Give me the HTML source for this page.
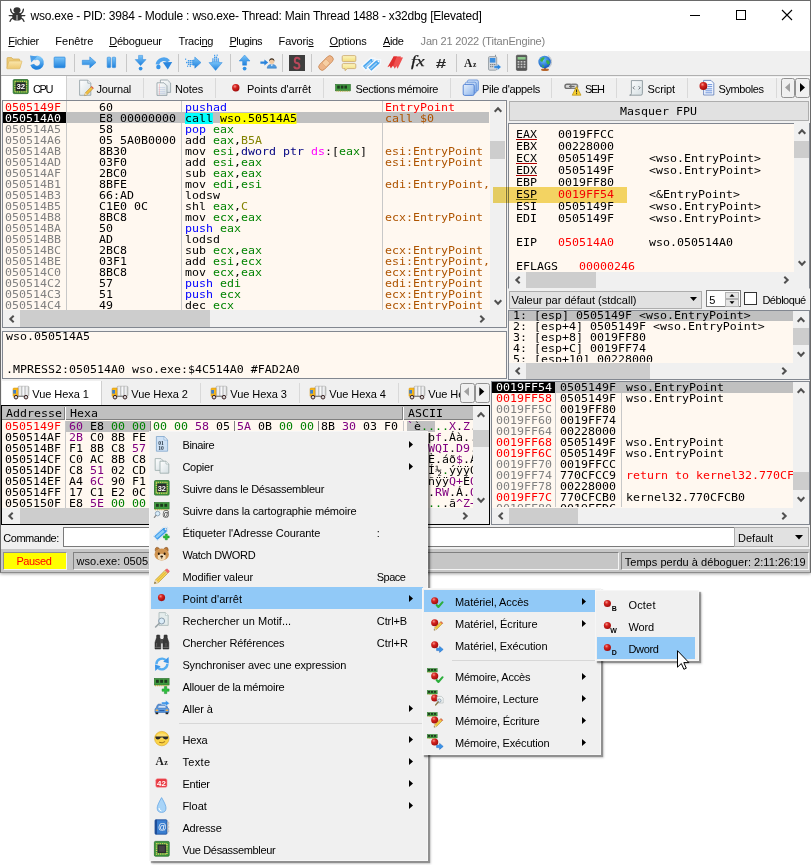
<!DOCTYPE html>
<html><head><meta charset="utf-8"><title>x32dbg</title>
<style>
*{box-sizing:border-box;margin:0;padding:0}
html,body{width:811px;height:865px;overflow:hidden;background:#fff}
body{position:relative;font-family:"Liberation Sans",sans-serif;font-size:11px;color:#000}
.a{position:absolute}
.m{font-family:"DejaVu Sans Mono","Liberation Mono",monospace;font-size:9.6px;white-space:pre;line-height:11px;transform:scaleX(1.2112);transform-origin:0 0}
.r{position:absolute;left:0;height:11px;white-space:pre}
.t{position:absolute;white-space:pre}
.c{overflow:hidden}
.red{color:#f00}.gr{color:#808080}.bl{color:#00f}.gn{color:#008300}.ol{color:#828200}.br{color:#ae5400}.pu{color:#800080}.nv{color:#000080}.mg{color:#f0f}.g0{color:#008000}
.sel{background:#c0c0c0}
svg{position:absolute;overflow:visible}
</style></head><body>

<div class="a" style="left:0px;top:0px;width:811px;height:573px;background:#f0f0f0;border:1px solid #6a6a6a;border-bottom:1px solid #8c8c8c;box-shadow:0 1px 3px rgba(0,0,0,.35);"></div>
<div class="a" style="left:1px;top:1px;width:809px;height:49px;background:#fff;"></div>
<div class="t " style="left:30.5px;top:10.44px;font-size:12px;line-height:12px;letter-spacing:-0.200px;">wso.exe - PID: 3984 - Module : wso.exe- Thread: Main Thread 1488 - x32dbg [Elevated]</div>
<svg style="left:0;top:0" width="30" height="30" viewBox="0 0 30 30"><g fill="none" stroke="#333" stroke-width="1.300" stroke-linecap="round"><path d="M13.600 13.800Q10.800 12.600 10.600 9.200M20.400 13.800Q23.200 12.600 23.400 9.200M9.200 15.600H24.800M13.400 17.800Q10.600 18.600 10 21.400M20.600 17.800Q23.400 18.600 24 21.400"/></g><ellipse cx="17" cy="10.200" rx="3.500" ry="3" fill="#333"/><path d="M12.200 16.400Q12.200 12.600 17 12.600T21.800 16.400Q21.800 20.600 17 20.600T12.200 16.400z" fill="#333"/><rect x="16.300" y="15" width="1.400" height="5.400" fill="#aaa"/></svg>
<svg style="left:0;top:0" width="811" height="30"><g stroke="#000" stroke-width="1" fill="none" shape-rendering="crispEdges"><path d="M690 15.5h10"/><rect x="736.5" y="10.5" width="9" height="9"/></g><path d="M782 10l10 10M792 10l-10 10" stroke="#000" stroke-width="1.1"/></svg>
<div class="t " style="left:8.3px;top:35.59px;font-size:11px;line-height:11px;letter-spacing:-0.374px;"><u>F</u>ichier</div>
<div class="t " style="left:55.3px;top:35.59px;font-size:11px;line-height:11px;letter-spacing:0.011px;">Fenêtre</div>
<div class="t " style="left:109.2px;top:35.59px;font-size:11px;line-height:11px;letter-spacing:-0.204px;"><u>D</u>ébogueur</div>
<div class="t " style="left:178.6px;top:35.59px;font-size:11px;line-height:11px;letter-spacing:-0.254px;">Traci<u>n</u>g</div>
<div class="t " style="left:229.5px;top:35.59px;font-size:11px;line-height:11px;letter-spacing:-0.511px;"><u>P</u>lugins</div>
<div class="t " style="left:278.6px;top:35.59px;font-size:11px;line-height:11px;letter-spacing:-0.152px;">Favori<u>s</u></div>
<div class="t " style="left:329.6px;top:35.59px;font-size:11px;line-height:11px;letter-spacing:-0.132px;"><u>O</u>ptions</div>
<div class="t " style="left:383px;top:35.59px;font-size:11px;line-height:11px;letter-spacing:-0.383px;"><u>A</u>ide</div>
<div class="t " style="left:420.6px;top:35.59px;font-size:11px;line-height:11px;color:#808080;letter-spacing:-0.193px;">Jan 21 2022 (TitanEngine)</div>
<div class="a" style="left:1px;top:50px;width:809px;height:26px;background:#f0f0f0;border-top:1px solid #fff;border-bottom:1px solid #b0b0b0;"></div>
<div class="a" style="left:74px;top:54px;width:1px;height:18px;background:#c8c8c8;"></div>
<div class="a" style="left:126px;top:54px;width:1px;height:18px;background:#c8c8c8;"></div>
<div class="a" style="left:178px;top:54px;width:1px;height:18px;background:#c8c8c8;"></div>
<div class="a" style="left:230px;top:54px;width:1px;height:18px;background:#c8c8c8;"></div>
<div class="a" style="left:282px;top:54px;width:1px;height:18px;background:#c8c8c8;"></div>
<div class="a" style="left:311px;top:54px;width:1px;height:18px;background:#c8c8c8;"></div>
<div class="a" style="left:456px;top:54px;width:1px;height:18px;background:#c8c8c8;"></div>
<div class="a" style="left:507px;top:54px;width:1px;height:18px;background:#c8c8c8;"></div>
<svg style="left:0;top:50px" width="811" height="26" viewBox="0 50 811 26">
<defs>
<linearGradient id="gb" x1="0" y1="0" x2="0" y2="1"><stop offset="0" stop-color="#7cc6fa"/><stop offset="1" stop-color="#1e80dc"/></linearGradient>
<linearGradient id="gf" x1="0" y1="0" x2="0" y2="1"><stop offset="0" stop-color="#fae6ac"/><stop offset="1" stop-color="#edc870"/></linearGradient>
<linearGradient id="gy" x1="0" y1="0" x2="0" y2="1"><stop offset="0" stop-color="#fdf6c0"/><stop offset="1" stop-color="#f2dc78"/></linearGradient>
<radialGradient id="gg" cx="0.4" cy="0.35" r="0.7"><stop offset="0" stop-color="#6cc0ff"/><stop offset="1" stop-color="#0a50b8"/></radialGradient>
</defs>
<!-- open folder -->
<path d="M7 68.300V58.400q0-.8.8-.8h3.800l1.300 1.400h6q.8 0 .8.800v1.300" fill="#eccb78" stroke="#d4a94c" stroke-width=".7"/>
<path d="M9.400 61H21.400q.7 0 .5.700L20 68.200q-.2.600-.9.600H7.400q-.700 0-.5-.700L8.800 61.600q.2-.6.600-.6z" fill="url(#gf)" stroke="#dab35a" stroke-width=".6"/>
<!-- restart -->
<path d="M33.600 59A5 5 0 1 1 32.200 64.400" fill="none" stroke="url(#gb)" stroke-width="4"/>
<path d="M30 55.400L37.200 56.600L31.200 62.600z" fill="#4a9ee8"/>
<!-- stop -->
<rect x="54.100" y="57.100" width="11" height="10.600" rx=".8" fill="url(#gb)" stroke="#2a86dc" stroke-width=".7"/>
<!-- run arrow -->
<path d="M82.3 60.3H89.8V56.9L96 62.4L89.8 67.9V64.6H82.3z" fill="url(#gb)" stroke="#2a86dc" stroke-width=".6"/>
<!-- pause -->
<rect x="107.2" y="57.2" width="3.4" height="10.4" rx=".7" fill="url(#gb)" stroke="#2a86dc" stroke-width=".6"/><rect x="112.2" y="57.2" width="3.4" height="10.4" rx=".7" fill="url(#gb)" stroke="#2a86dc" stroke-width=".6"/>
<!-- step into -->
<path d="M138.6 55.4H142.6V59.6H146L140.6 65.6L135.2 59.6H138.6z" fill="url(#gb)" stroke="#2a86dc" stroke-width=".5"/><circle cx="140.6" cy="68.6" r="1.9" fill="#2f90e6"/>
<!-- step over -->
<path d="M157.400 64.600A6.400 6.400 0 0 1 168.600 61.400" fill="none" stroke="#4fa4ee" stroke-width="3.600"/><path d="M162.800 62.200L172.200 62L167.800 69.400z" fill="#2a86de"/><circle cx="158.400" cy="67" r="2.200" fill="#3494ea"/>
<!-- trace into -->
<path d="M192.800 60H194.800V57L201 62.600L194.800 68.200V65.200H192.800z" fill="url(#gb)" stroke="#2a86dc" stroke-width=".5"/>
<g fill="#3f9aec"><rect x="186" y="61.8" width="1.400" height="1.400"/><rect x="187.8" y="60" width="1.400" height="1.400"/><rect x="187.8" y="61.8" width="1.400" height="1.400"/><rect x="187.8" y="63.6" width="1.400" height="1.400"/><rect x="189.6" y="60" width="1.400" height="1.400"/><rect x="189.6" y="61.8" width="1.400" height="1.400"/><rect x="189.6" y="63.6" width="1.400" height="1.400"/><rect x="191.4" y="60" width="1.400" height="1.400"/><rect x="191.4" y="61.8" width="1.400" height="1.400"/><rect x="191.4" y="63.6" width="1.400" height="1.400"/><rect x="185" y="58.600" width="1.200" height="1.200"/><rect x="187" y="65.600" width="1.200" height="1.200"/><rect x="189.600" y="65.400" width="1.400" height="1.400"/></g>
<!-- trace over -->
<path d="M212 62V61.800H219.200V62.600H222.200L215.600 70.400L209 62.600H212z" fill="url(#gb)" stroke="#2a86dc" stroke-width=".5"/>
<g fill="#3f9aec"><rect x="212.2" y="58.4" width="1.400" height="1.400"/><rect x="212.2" y="60.2" width="1.400" height="1.400"/><rect x="214" y="56.6" width="1.400" height="1.400"/><rect x="214" y="58.4" width="1.400" height="1.400"/><rect x="214" y="60.2" width="1.400" height="1.400"/><rect x="215.8" y="56.6" width="1.400" height="1.400"/><rect x="215.8" y="58.4" width="1.400" height="1.400"/><rect x="215.8" y="60.2" width="1.400" height="1.400"/><rect x="217.6" y="58.4" width="1.400" height="1.400"/><rect x="217.6" y="60.2" width="1.400" height="1.400"/><rect x="214" y="54.800" width="1.200" height="1.200"/><rect x="216.600" y="54.600" width="1.200" height="1.200"/></g>
<!-- run till return -->
<path d="M242.6 65.2H246.6V61H250L244.6 55L239.2 61H242.6z" fill="url(#gb)" stroke="#2a86dc" stroke-width=".5"/><circle cx="244.6" cy="68.6" r="1.9" fill="#2f90e6"/>
<!-- run to user -->
<path d="M260.4 61.4H264.4V59.6L268.2 62.6L264.4 65.6V63.8H260.4z" fill="#2a84dc"/>
<path d="M267.2 68.2q0-3.8 4.6-3.8t4.6 3.8z" fill="#4f9ade" stroke="#2f6fb4" stroke-width=".5"/><path d="M270.6 64.4l1.2 1.8l1.2-1.8z" fill="#fff"/>
<circle cx="271.8" cy="61.6" r="2.5" fill="#f0c8a0"/><path d="M269.2 61.4q0-3.2 2.6-3.2t2.6 3.2q-.8-1.8-2.6-1.8t-2.6 1.800z" fill="#3a2a1a"/>
<!-- scylla S -->
<rect x="289" y="55" width="16" height="16" fill="#3e3e3e"/>
<path d="M299.800 59.600Q299.200 57.600 297 57.800T294.800 60.400T297 63T299.400 65.800T297 68.400T294.200 66.400" fill="none" stroke="#b8485a" stroke-width="2"/>
<!-- patch -->
<g transform="rotate(-45 326 63)"><rect x="317.200" y="59.600" width="17.600" height="6.800" rx="3.400" fill="#eeb588" stroke="#c98a58" stroke-width=".8"/><rect x="323.200" y="60.200" width="5.600" height="5.600" fill="#f6cfa4" stroke="#d89c68" stroke-width=".5"/></g>
<!-- comments -->
<rect x="342.2" y="55.6" width="13.600" height="6" rx="1.2" fill="url(#gy)" stroke="#c8a468" stroke-width=".8"/>
<path d="M343.400 63.600H354.600q1.200 0 1.200 1.200V67.400q0 1.200 -1.200 1.200H347.400L345 70.600V68.600H343.400q-1.200 0 -1.200 -1.200V64.800q0 -1.200 1.200 -1.200z" fill="url(#gy)" stroke="#c8a468" stroke-width=".8"/>
<!-- labels (blue tags) -->
<g transform="rotate(-42 369 63.500)"><path d="M362 60.600H374L377 63.500L374 66.400H362z" fill="#4aa6ee" stroke="#f4f8fc" stroke-width="1.500"/><path d="M363.500 63.500h8.500" stroke="#9cd0f8" stroke-width="1.400"/><circle cx="374.400" cy="63.500" r=".9" fill="#fff"/></g>
<g transform="rotate(-42 374.500 65)"><path d="M367.500 62.100H379.500L382.500 65L379.500 67.900H367.500z" fill="#4aa6ee" stroke="#f4f8fc" stroke-width="1.500"/><path d="M369 65h8.500" stroke="#9cd0f8" stroke-width="1.400"/><circle cx="379.900" cy="65" r=".9" fill="#fff"/></g>
<!-- bookmarks -->
<path d="M393.600 56.400L401 56.400L394.800 68.800L393.400 65.800L390 67.800z" fill="#e83838"/><path d="M396 57L403 57.400L397.600 68.800L396.200 66L393.400 67z" fill="#f05050"/><path d="M387.400 67.200L393.600 56.400L397 56.400L391 68.600L390 66z" fill="#e03030"/>
<!-- fx -->
<text x="411" y="66.300" font-family="Liberation Serif,serif" font-style="italic" font-size="14.500" fill="#1a1a1a" stroke="#1a1a1a" stroke-width=".25" textLength="13.500" lengthAdjust="spacingAndGlyphs">fx</text>
<!-- hash -->
<text x="435.600" y="67.700" font-family="Liberation Sans,sans-serif" font-style="italic" font-weight="bold" font-size="13.200" fill="#2a2a2a" textLength="10.400" lengthAdjust="spacingAndGlyphs">#</text>
<!-- Az -->
<text x="464" y="67" font-family="Liberation Serif,serif" font-weight="bold" font-size="11.500" fill="#222">A</text><text x="473" y="67" font-family="Liberation Serif,serif" font-weight="bold" font-size="7.500" fill="#222">z</text>
<!-- phone -->
<rect x="488.500" y="56.600" width="8.200" height="13.600" rx="1.200" fill="#d4d8dc" stroke="#8c949c" stroke-width=".8"/><rect x="489.800" y="58" width="5.600" height="4.600" fill="#3a8ee0"/><rect x="495" y="54.800" width="1" height="2" fill="#8c949c"/>
<g fill="#808890"><rect x="490" y="64" width="1.400" height="1.200"/><rect x="492" y="64" width="1.400" height="1.200"/><rect x="494" y="64" width="1.400" height="1.200"/><rect x="490" y="66" width="1.400" height="1.200"/><rect x="492" y="66" width="1.400" height="1.200"/><rect x="494" y="66" width="1.400" height="1.200"/></g>
<path d="M494 65.800H497.400V63.800L501.200 67L497.400 70.200V68.200H494z" fill="#2a84dc" stroke="#e8f2fc" stroke-width=".4"/>
<!-- calculator -->
<rect x="516.400" y="55.200" width="10.400" height="15.200" rx="1" fill="#5a5a5a" stroke="#3c3c3c" stroke-width=".6"/><rect x="517.600" y="57" width="8" height="2.600" fill="#8cc88c"/>
<g fill="#c8c8c8"><rect x="517.600" y="61" width="1.800" height="1.600"/><rect x="520.600" y="61" width="1.800" height="1.600"/><rect x="523.600" y="61" width="1.800" height="1.600"/><rect x="517.600" y="63.600" width="1.800" height="1.600"/><rect x="520.600" y="63.600" width="1.800" height="1.600"/><rect x="523.600" y="63.600" width="1.800" height="1.600"/><rect x="517.600" y="66.200" width="1.800" height="1.600"/><rect x="520.600" y="66.200" width="1.800" height="1.600"/><rect x="523.600" y="66.200" width="1.800" height="1.600"/></g>
<!-- globe -->
<path d="M548 55.600A7.400 7.400 0 0 1 548.400 68" fill="none" stroke="#b8c0c8" stroke-width="1"/>
<ellipse cx="545" cy="69.800" rx="4" ry="1.300" fill="#b86830"/><rect x="544.200" y="67.600" width="1.600" height="2" fill="#a05828"/>
<circle cx="544.600" cy="62" r="6.200" fill="url(#gg)"/>
<path d="M541 58.400q1.600-1.400 3.400-1.200q.6 1.400-.6 2.200t-1 2.200q-1.600.4-2.400-.6t.600-2.600z M546 60.600q1.800-.8 3 .4t.6 3q-1.400 1-2.400-.2t-1.200-3.200z M542.400 64.600q1.400.2 1.600 1.600t-.8 1.400t-.800-3z" fill="#3cae48"/>
</svg>
<div class="a" style="left:1px;top:76px;width:809px;height:24px;background:#f0f0f0;"></div>
<div class="a" style="left:67px;top:77px;width:743px;height:1px;background:#fafafa;"></div>
<div class="a" style="left:2px;top:76px;width:65px;height:24px;background:#fff;border-right:1px solid #d0d0d0;"></div>
<div class="a" style="left:143px;top:78px;width:1px;height:20px;background:#d9d9d9;"></div>
<div class="a" style="left:215px;top:78px;width:1px;height:20px;background:#d9d9d9;"></div>
<div class="a" style="left:323px;top:78px;width:1px;height:20px;background:#d9d9d9;"></div>
<div class="a" style="left:450px;top:78px;width:1px;height:20px;background:#d9d9d9;"></div>
<div class="a" style="left:551px;top:78px;width:1px;height:20px;background:#d9d9d9;"></div>
<div class="a" style="left:616px;top:78px;width:1px;height:20px;background:#d9d9d9;"></div>
<div class="a" style="left:687px;top:78px;width:1px;height:20px;background:#d9d9d9;"></div>
<div class="a" style="left:776px;top:78px;width:1px;height:20px;background:#d9d9d9;"></div>
<div class="t " style="left:33px;top:84.09px;font-size:11px;line-height:11px;letter-spacing:-1.411px;">CPU</div>
<div class="t " style="left:96.5px;top:84.09px;font-size:11px;line-height:11px;letter-spacing:-0.225px;">Journal</div>
<div class="t " style="left:175px;top:84.09px;font-size:11px;line-height:11px;letter-spacing:-0.150px;">Notes</div>
<div class="t " style="left:247px;top:84.09px;font-size:11px;line-height:11px;letter-spacing:-0.033px;">Points d'arrêt</div>
<div class="t " style="left:355.5px;top:84.09px;font-size:11px;line-height:11px;letter-spacing:-0.347px;">Sections mémoire</div>
<div class="t " style="left:482px;top:84.09px;font-size:11px;line-height:11px;letter-spacing:-0.310px;">Pile d'appels</div>
<div class="t " style="left:585px;top:84.09px;font-size:11px;line-height:11px;letter-spacing:-1.375px;">SEH</div>
<div class="t " style="left:647.5px;top:84.09px;font-size:11px;line-height:11px;letter-spacing:-0.104px;">Script</div>
<div class="t " style="left:718.5px;top:84.09px;font-size:11px;line-height:11px;letter-spacing:-0.412px;">Symboles</div>
<svg style="left:0;top:76px" width="811" height="24" viewBox="0 76 811 24">
<defs><radialGradient id="rb" cx="0.38" cy="0.32" r="0.75"><stop offset="0" stop-color="#f4958c"/><stop offset="0.35" stop-color="#d62420"/><stop offset="1" stop-color="#960808"/></radialGradient>
<linearGradient id="pg" x1="0" y1="0" x2="1" y2="1"><stop offset="0" stop-color="#ffffff"/><stop offset="1" stop-color="#d4dee2"/></linearGradient>
<linearGradient id="sk" x1="0" y1="0" x2="1" y2="1"><stop offset="0" stop-color="#e6f0fc"/><stop offset="1" stop-color="#8cb4ec"/></linearGradient></defs>
<!-- cpu chip -->
<g id="chip"><rect x="13.200" y="79.600" width="15" height="14" rx="1" fill="#3a8f3a" stroke="#246424" stroke-width=".8"/><rect x="14.900" y="81.300" width="11.600" height="10.600" fill="none" stroke="#e6cf5c" stroke-width="1.300" stroke-dasharray=".9 .9"/><rect x="15.700" y="82.400" width="10" height="8.400" fill="#262626"/><text x="16.400" y="89.300" font-family="Liberation Sans,sans-serif" font-weight="bold" font-size="6.800" fill="#fff" textLength="8.600" lengthAdjust="spacingAndGlyphs">32</text></g>
<!-- journal: page + pencil -->
<path d="M79.600 80.200H87.800L90.800 83.200V95.300H79.600z" fill="url(#pg)" stroke="#8e9ca2" stroke-width=".8"/><path d="M87.800 80.200V83.200H90.800" fill="#f4f6f8" stroke="#8e9ca2" stroke-width=".7"/>
<path d="M84.600 95.600L85.400 92.800L91.600 86.400L93.400 88.200L87.200 94.600z" fill="#f2c040" stroke="#a87818" stroke-width=".5"/><path d="M84.600 95.600L85.400 92.800L87.200 94.600z" fill="#f0d8b0"/><path d="M91 87L92.800 88.800L93.600 88L91.800 86.200z" fill="#e05050"/>
<!-- notes: two pages -->
<path d="M160.400 80H167.500L170.600 83V92.400H160.400z" fill="url(#pg)" stroke="#8e9ca2" stroke-width=".8"/>
<path d="M157 82.800H164L167 85.800V95.400H157z" fill="url(#pg)" stroke="#8e9ca2" stroke-width=".8"/><path d="M158.600 87.600h6.600M158.600 89.600h6.600M158.600 91.600h6.600M158.600 93.400h6.600" stroke="#b8c4e0" stroke-width=".6"/><path d="M159.400 84v11" stroke="#f0a0a0" stroke-width=".5"/>
<!-- breakpoint -->
<circle cx="235.800" cy="87.800" r="3.700" fill="url(#rb)"/>
<!-- memory -->
<g id="ram"><rect x="335.600" y="84.400" width="14.800" height="6.400" fill="#3f9a3f" stroke="#2a6e2a" stroke-width=".6"/><rect x="337.200" y="85.600" width="2.600" height="3" fill="#1e3a1e"/><rect x="340.800" y="85.600" width="2.600" height="3" fill="#1e3a1e"/><rect x="344.400" y="85.600" width="2.600" height="3" fill="#1e3a1e"/><path d="M336.400 91.200h13.200" stroke="#c8b040" stroke-width="1" stroke-dasharray="1 .8"/></g>
<!-- call stack -->
<rect x="467.400" y="80" width="11" height="11" rx="1.500" fill="url(#sk)" stroke="#5a8ad8" stroke-width=".8"/><rect x="465.200" y="82.200" width="11" height="11" rx="1.500" fill="url(#sk)" stroke="#5a8ad8" stroke-width=".8"/><rect x="463.200" y="84.400" width="11" height="11" rx="1.500" fill="url(#sk)" stroke="#4a7ad0" stroke-width=".9"/>
<!-- SEH chain + warning -->
<rect x="565" y="84.200" width="7" height="4.200" rx="2" fill="#d8d8d8" stroke="#6e6e6e" stroke-width="1.400"/><rect x="570.600" y="84.200" width="7" height="4.200" rx="2" fill="#d8d8d8" stroke="#7e7e7e" stroke-width="1.400"/><path d="M569 86.400h5.600" stroke="#6a6a6a" stroke-width="1.200"/>
<path d="M576.600 86.600L581 95.200H572.200z" fill="#f8d030" stroke="#b89010" stroke-width=".7" stroke-linejoin="round"/><path d="M576.600 89.400v3M576.600 93.200v1" stroke="#222" stroke-width="1"/>
<!-- script -->
<path d="M631.400 80.600H642.400V93.600q0 1.600-1.600 1.600H629.600q1.800 0 1.800-1.600z" fill="url(#pg)" stroke="#7e8a90" stroke-width=".8"/><path d="M634.600 86.200L633 87.800L634.600 89.400M638.600 86.200L640.200 87.800L638.600 89.400" fill="none" stroke="#505860" stroke-width=".8"/>
<!-- symbols -->
<path d="M703.600 80.400H711L713.800 83.200V95H703.600z" fill="#f4f8ff" stroke="#5a7ab8" stroke-width=".8"/><path d="M707.600 84.600h4.600M707.600 86.600h4.600M705.400 88.800h6.800M705.400 90.800h6.800M705.400 92.800h6.800" stroke="#4a78d0" stroke-width=".8"/>
<circle cx="703.400" cy="86" r="3.900" fill="url(#rb)"/>
</svg>
<div class="a" style="left:780.5px;top:77.5px;width:14.5px;height:20px;background:#f0f0f0;border:1px solid #929292;border-radius:2.5px;"></div>
<div class="a" style="left:795px;top:77.5px;width:14.5px;height:20px;background:#f0f0f0;border:1px solid #929292;border-radius:2.5px;"></div>
<svg style="left:781px;top:78px" width="28" height="20"><path d="M9 5v9l-5-4.5z" fill="#a0a0a0"/><path d="M19 5v9l5-4.5z" fill="#000"/></svg>
<div class="a" style="left:2px;top:100px;width:505px;height:228px;background:#fff8f0;border:1px solid #828790;"></div>
<div class="a" style="left:66px;top:101px;width:1px;height:209px;background:#c8c8c8;"></div>
<div class="a" style="left:181px;top:101px;width:1px;height:209px;background:#c8c8c8;"></div>
<div class="a" style="left:382px;top:101px;width:1px;height:209px;background:#c8c8c8;"></div>
<div class="a" style="left:3px;top:112px;width:486px;height:11px;background:#c0c0c0;"></div>
<div class="a" style="left:3px;top:112px;width:63px;height:11px;background:#000;"></div>
<div class="t m" style="left:5px;top:101.5px;color:#f00;">0505149F</div>
<div class="t m" style="left:99px;top:101.5px;">60</div>
<div class="t m" style="left:185px;top:101.5px;"><span class="bl">pushad</span></div>
<div class="a c" style="left:385px;top:101.5px;width:104px;height:11px"><div class="t m" style="left:0;top:0;color:#ae5400;"><span class="red">EntryPoint</span></div></div>
<div class="t m" style="left:5px;top:112.5px;color:#fff;">050514A0</div>
<div class="t m" style="left:99px;top:112.5px;">E8 00000000</div>
<div class="t m" style="left:185px;top:112.5px;"><span style="background:#0ff">call</span> <span style="background:#ff0">wso.50514A5</span></div>
<div class="a c" style="left:385px;top:112.5px;width:104px;height:11px"><div class="t m" style="left:0;top:0;color:#ae5400;">call $0</div></div>
<div class="t m" style="left:5px;top:123.5px;color:#808080;">050514A5</div>
<div class="t m" style="left:99px;top:123.5px;">58</div>
<div class="t m" style="left:185px;top:123.5px;"><span class="bl">pop</span> <span class="gn">eax</span></div>
<div class="t m" style="left:5px;top:134.5px;color:#808080;">050514A6</div>
<div class="t m" style="left:99px;top:134.5px;">05 5A0B0000</div>
<div class="t m" style="left:185px;top:134.5px;">add <span class="gn">eax</span>,<span class="ol">B5A</span></div>
<div class="t m" style="left:5px;top:145.5px;color:#808080;">050514AB</div>
<div class="t m" style="left:99px;top:145.5px;">8B30</div>
<div class="t m" style="left:185px;top:145.5px;">mov <span class="gn">esi</span>,<span class="nv">dword ptr</span> <span class="mg">ds</span>:[<span class="gn">eax</span>]</div>
<div class="a c" style="left:385px;top:145.5px;width:104px;height:11px"><div class="t m" style="left:0;top:0;color:#ae5400;">esi:EntryPoint</div></div>
<div class="t m" style="left:5px;top:156.5px;color:#808080;">050514AD</div>
<div class="t m" style="left:99px;top:156.5px;">03F0</div>
<div class="t m" style="left:185px;top:156.5px;">add <span class="gn">esi</span>,<span class="gn">eax</span></div>
<div class="a c" style="left:385px;top:156.5px;width:104px;height:11px"><div class="t m" style="left:0;top:0;color:#ae5400;">esi:EntryPoint</div></div>
<div class="t m" style="left:5px;top:167.5px;color:#808080;">050514AF</div>
<div class="t m" style="left:99px;top:167.5px;">2BC0</div>
<div class="t m" style="left:185px;top:167.5px;">sub <span class="gn">eax</span>,<span class="gn">eax</span></div>
<div class="t m" style="left:5px;top:178.5px;color:#808080;">050514B1</div>
<div class="t m" style="left:99px;top:178.5px;">8BFE</div>
<div class="t m" style="left:185px;top:178.5px;">mov <span class="gn">edi</span>,<span class="gn">esi</span></div>
<div class="a c" style="left:385px;top:178.5px;width:104px;height:11px"><div class="t m" style="left:0;top:0;color:#ae5400;">edi:EntryPoint,</div></div>
<div class="t m" style="left:5px;top:189.5px;color:#808080;">050514B3</div>
<div class="t m" style="left:99px;top:189.5px;">66:AD</div>
<div class="t m" style="left:185px;top:189.5px;">lodsw</div>
<div class="t m" style="left:5px;top:200.5px;color:#808080;">050514B5</div>
<div class="t m" style="left:99px;top:200.5px;">C1E0 0C</div>
<div class="t m" style="left:185px;top:200.5px;">shl <span class="gn">eax</span>,<span class="ol">C</span></div>
<div class="t m" style="left:5px;top:211.5px;color:#808080;">050514B8</div>
<div class="t m" style="left:99px;top:211.5px;">8BC8</div>
<div class="t m" style="left:185px;top:211.5px;">mov <span class="gn">ecx</span>,<span class="gn">eax</span></div>
<div class="a c" style="left:385px;top:211.5px;width:104px;height:11px"><div class="t m" style="left:0;top:0;color:#ae5400;">ecx:EntryPoint</div></div>
<div class="t m" style="left:5px;top:222.5px;color:#808080;">050514BA</div>
<div class="t m" style="left:99px;top:222.5px;">50</div>
<div class="t m" style="left:185px;top:222.5px;"><span class="bl">push</span> <span class="gn">eax</span></div>
<div class="t m" style="left:5px;top:233.5px;color:#808080;">050514BB</div>
<div class="t m" style="left:99px;top:233.5px;">AD</div>
<div class="t m" style="left:185px;top:233.5px;">lodsd</div>
<div class="t m" style="left:5px;top:244.5px;color:#808080;">050514BC</div>
<div class="t m" style="left:99px;top:244.5px;">2BC8</div>
<div class="t m" style="left:185px;top:244.5px;">sub <span class="gn">ecx</span>,<span class="gn">eax</span></div>
<div class="a c" style="left:385px;top:244.5px;width:104px;height:11px"><div class="t m" style="left:0;top:0;color:#ae5400;">ecx:EntryPoint</div></div>
<div class="t m" style="left:5px;top:255.5px;color:#808080;">050514BE</div>
<div class="t m" style="left:99px;top:255.5px;">03F1</div>
<div class="t m" style="left:185px;top:255.5px;">add <span class="gn">esi</span>,<span class="gn">ecx</span></div>
<div class="a c" style="left:385px;top:255.5px;width:104px;height:11px"><div class="t m" style="left:0;top:0;color:#ae5400;">esi:EntryPoint,</div></div>
<div class="t m" style="left:5px;top:266.5px;color:#808080;">050514C0</div>
<div class="t m" style="left:99px;top:266.5px;">8BC8</div>
<div class="t m" style="left:185px;top:266.5px;">mov <span class="gn">ecx</span>,<span class="gn">eax</span></div>
<div class="a c" style="left:385px;top:266.5px;width:104px;height:11px"><div class="t m" style="left:0;top:0;color:#ae5400;">ecx:EntryPoint</div></div>
<div class="t m" style="left:5px;top:277.5px;color:#808080;">050514C2</div>
<div class="t m" style="left:99px;top:277.5px;">57</div>
<div class="t m" style="left:185px;top:277.5px;"><span class="bl">push</span> <span class="gn">edi</span></div>
<div class="a c" style="left:385px;top:277.5px;width:104px;height:11px"><div class="t m" style="left:0;top:0;color:#ae5400;">edi:EntryPoint</div></div>
<div class="t m" style="left:5px;top:288.5px;color:#808080;">050514C3</div>
<div class="t m" style="left:99px;top:288.5px;">51</div>
<div class="t m" style="left:185px;top:288.5px;"><span class="bl">push</span> <span class="gn">ecx</span></div>
<div class="a c" style="left:385px;top:288.5px;width:104px;height:11px"><div class="t m" style="left:0;top:0;color:#ae5400;">ecx:EntryPoint</div></div>
<div class="t m" style="left:5px;top:299.5px;color:#808080;">050514C4</div>
<div class="t m" style="left:99px;top:299.5px;">49</div>
<div class="t m" style="left:185px;top:299.5px;">dec <span class="gn">ecx</span></div>
<div class="a c" style="left:385px;top:299.5px;width:104px;height:11px"><div class="t m" style="left:0;top:0;color:#ae5400;">ecx:EntryPoint</div></div>
<div class="a" style="left:490px;top:101px;width:15px;height:209px;background:#f0f0f0;"></div>
<div class="a" style="left:490px;top:141px;width:15px;height:18px;background:#cdcdcd;"></div>
<svg style="left:497.5px;top:110.2px" width="1" height="1"><path d="M-3.3 1.7L0 -1.7L3.3 1.7" fill="none" stroke="#505050" stroke-width="2"/></svg>
<svg style="left:497.5px;top:301.5px" width="1" height="1"><path d="M-3.3 -1.7L0 1.7L3.3 -1.7" fill="none" stroke="#505050" stroke-width="2"/></svg>
<div class="a" style="left:3px;top:310px;width:487px;height:17px;background:#f0f0f0;"></div>
<div class="a" style="left:20px;top:310px;width:190px;height:17px;background:#cdcdcd;"></div>
<svg style="left:11.5px;top:318.5px" width="1" height="1"><path d="M1.7 -3.3L-1.7 0L1.700 3.300" fill="none" stroke="#505050" stroke-width="2"/></svg>
<svg style="left:481.5px;top:318.5px" width="1" height="1"><path d="M-1.7 -3.3L1.7 0L-1.700 3.300" fill="none" stroke="#505050" stroke-width="2"/></svg>
<div class="a" style="left:490px;top:310px;width:15px;height:17px;background:#f0f0f0;"></div>
<div class="a" style="left:509px;top:101px;width:300px;height:20px;background:#e1e1e1;border:1px solid #adadad;"></div>
<div class="t m" style="left:620px;top:105.5px;">Masquer FPU</div>
<div class="a" style="left:508px;top:123px;width:302px;height:166px;background:#fff8f0;border:1px solid #828790;border-bottom-color:#f0f0f0;"></div>
<div class="t m" style="left:516px;top:128.8px;">EAX</div>
<div class="a" style="left:516px;top:138.60000000000002px;width:21px;height:1.8px;background:#b00000;"></div>
<div class="t m" style="left:558px;top:128.8px;">0019FFCC</div>
<div class="t m" style="left:516px;top:140.8px;">EBX</div>
<div class="t m" style="left:558px;top:140.8px;">00228000</div>
<div class="t m" style="left:516px;top:152.8px;">ECX</div>
<div class="a" style="left:516px;top:162.60000000000002px;width:21px;height:1.8px;background:#b00000;"></div>
<div class="t m" style="left:558px;top:152.8px;">0505149F</div>
<div class="t m" style="left:649px;top:152.8px;">&lt;wso.EntryPoint&gt;</div>
<div class="t m" style="left:516px;top:164.8px;">EDX</div>
<div class="a" style="left:516px;top:174.60000000000002px;width:21px;height:1.8px;background:#b00000;"></div>
<div class="t m" style="left:558px;top:164.8px;">0505149F</div>
<div class="t m" style="left:649px;top:164.8px;">&lt;wso.EntryPoint&gt;</div>
<div class="t m" style="left:516px;top:176.8px;">EBP</div>
<div class="t m" style="left:558px;top:176.8px;">0019FF80</div>
<div class="t m" style="left:516px;top:188.8px;">ESP</div>
<div class="a" style="left:516px;top:198.60000000000002px;width:21px;height:1.8px;background:#808000;"></div>
<div class="t m" style="left:558px;top:188.8px;color:#f00;">0019FF54</div>
<div class="t m" style="left:649px;top:188.8px;">&lt;&amp;EntryPoint&gt;</div>
<div class="t m" style="left:516px;top:200.8px;">ESI</div>
<div class="t m" style="left:558px;top:200.8px;">0505149F</div>
<div class="t m" style="left:649px;top:200.8px;">&lt;wso.EntryPoint&gt;</div>
<div class="t m" style="left:516px;top:212.8px;">EDI</div>
<div class="t m" style="left:558px;top:212.8px;">0505149F</div>
<div class="t m" style="left:649px;top:212.8px;">&lt;wso.EntryPoint&gt;</div>
<div class="t m" style="left:516px;top:236.8px;">EIP</div>
<div class="t m" style="left:558px;top:236.8px;color:#f00;">050514A0</div>
<div class="t m" style="left:649px;top:236.8px;">wso.050514A0</div>
<div class="a c" style="left:509px;top:260.8px;width:285px;height:10.7px"><div class="t m" style="left:7px;top:0">EFLAGS   <span class="red">00000246</span></div></div>
<div class="a" style="left:794px;top:123px;width:15px;height:148.5px;background:#f0f0f0;"></div>
<div class="a" style="left:794px;top:140.5px;width:15px;height:17.0px;background:#cdcdcd;"></div>
<svg style="left:801.5px;top:132.2px" width="1" height="1"><path d="M-3.3 1.7L0 -1.7L3.3 1.7" fill="none" stroke="#505050" stroke-width="2"/></svg>
<svg style="left:801.5px;top:263.0px" width="1" height="1"><path d="M-3.3 -1.7L0 1.7L3.3 -1.7" fill="none" stroke="#505050" stroke-width="2"/></svg>
<div class="a" style="left:509px;top:271.5px;width:285px;height:16.5px;background:#f0f0f0;"></div>
<div class="a" style="left:526px;top:271.5px;width:70px;height:16.5px;background:#cdcdcd;"></div>
<svg style="left:517.5px;top:279.75px" width="1" height="1"><path d="M1.7 -3.3L-1.7 0L1.700 3.300" fill="none" stroke="#505050" stroke-width="2"/></svg>
<svg style="left:785.5px;top:279.75px" width="1" height="1"><path d="M-1.7 -3.3L1.7 0L-1.700 3.300" fill="none" stroke="#505050" stroke-width="2"/></svg>
<div class="a" style="left:794px;top:271.5px;width:15px;height:16.5px;background:#f0f0f0;"></div>
<div class="a" style="left:509px;top:291px;width:193px;height:18px;background:#e1e1e1;border:1px solid #adadad;"></div>
<div class="t " style="left:511.5px;top:295.29px;font-size:11px;line-height:11px;letter-spacing:-0.005px;">Valeur par défaut (stdcall)</div>
<svg style="left:690.3px;top:297px" width="8" height="5"><path d="M0 0h7l-3.500 4z" fill="#000"/></svg>
<div class="a" style="left:706px;top:290px;width:35px;height:17px;background:#fff;border:1px solid #7a7a7a;"></div>
<div class="t " style="left:709.3px;top:294.69px;font-size:11px;line-height:11px;">5</div>
<div class="a" style="left:725px;top:291.5px;width:14px;height:7.5px;background:#e4e4e4;border:1px solid #b4b4b4;"></div>
<div class="a" style="left:725px;top:299px;width:14px;height:7.5px;background:#e4e4e4;border:1px solid #b4b4b4;"></div>
<svg style="left:729px;top:293px" width="8" height="12"><path d="M0.500 3.800L3 1L5.500 3.800z M0.500 8.200L3 11L5.500 8.200z" fill="#000"/></svg>
<div class="a" style="left:744px;top:291.5px;width:13px;height:13px;background:#fff;border:1px solid #333;"></div>
<div class="t " style="left:762.4px;top:294.69px;font-size:11px;line-height:11px;letter-spacing:-0.474px;">Débloqué</div>
<div class="a" style="left:508px;top:309.5px;width:302px;height:70px;background:#fff8f0;border:1px solid #828790;"></div>
<div class="a" style="left:509px;top:310.5px;width:283.5px;height:10px;background:#c0c0c0;"></div>
<div class="a c" style="left:509px;top:310px;width:286px;height:52px">
<div class="t m" style="left:4px;top:-0.5px">1: [esp] 0505149F &lt;wso.EntryPoint&gt;</div>
<div class="t m" style="left:4px;top:10.5px">2: [esp+4] 0505149F &lt;wso.EntryPoint&gt;</div>
<div class="t m" style="left:4px;top:21.5px">3: [esp+8] 0019FF80</div>
<div class="t m" style="left:4px;top:32.5px">4: [esp+C] 0019FF74</div>
<div class="t m" style="left:4px;top:43.5px">5: [esp+10] 00228000</div>
</div>
<div class="a" style="left:792.5px;top:310.5px;width:16.5px;height:52px;background:#f0f0f0;"></div>
<div class="a" style="left:792.5px;top:327.5px;width:16.5px;height:17.19999999999999px;background:#cdcdcd;"></div>
<svg style="left:800.75px;top:319.7px" width="1" height="1"><path d="M-3.3 1.7L0 -1.7L3.3 1.7" fill="none" stroke="#505050" stroke-width="2"/></svg>
<svg style="left:800.75px;top:354.0px" width="1" height="1"><path d="M-3.3 -1.7L0 1.7L3.3 -1.7" fill="none" stroke="#505050" stroke-width="2"/></svg>
<div class="a" style="left:509px;top:362.5px;width:283.5px;height:16px;background:#f0f0f0;"></div>
<div class="a" style="left:526px;top:362.5px;width:124px;height:16px;background:#cdcdcd;"></div>
<svg style="left:517.5px;top:370.5px" width="1" height="1"><path d="M1.7 -3.3L-1.7 0L1.700 3.300" fill="none" stroke="#505050" stroke-width="2"/></svg>
<svg style="left:784.0px;top:370.5px" width="1" height="1"><path d="M-1.7 -3.3L1.7 0L-1.700 3.300" fill="none" stroke="#505050" stroke-width="2"/></svg>
<div class="a" style="left:792.5px;top:362.5px;width:16.5px;height:16px;background:#f0f0f0;"></div>
<div class="a" style="left:2px;top:331px;width:505px;height:48px;background:#fff8f0;border:1px solid #828790;"></div>
<div class="t m" style="left:6px;top:330.8px;">wso.050514A5</div>
<div class="t m" style="left:6px;top:363.8px;">.MPRESS2:050514A0 wso.exe:$4C514A0 #FAD2A0</div>
<div class="a" style="left:1px;top:380px;width:490px;height:25px;background:#f0f0f0;"></div>
<div class="a" style="left:2px;top:381px;width:100px;height:25px;background:#fff;border-right:1px solid #d0d0d0;"></div>
<div class="a" style="left:200px;top:383px;width:1px;height:20px;background:#d9d9d9;"></div>
<div class="a" style="left:299px;top:383px;width:1px;height:20px;background:#d9d9d9;"></div>
<div class="a" style="left:398px;top:383px;width:1px;height:20px;background:#d9d9d9;"></div>
<div class="a c" style="left:1px;top:380px;width:459px;height:25px">
<div class="t" style="left:31.3px;top:9.29px;font-size:11px;line-height:11px;letter-spacing:-0.05px">Vue Hexa 1</div>
<div class="t" style="left:130.3px;top:9.29px;font-size:11px;line-height:11px;letter-spacing:-0.05px">Vue Hexa 2</div>
<div class="t" style="left:229.3px;top:9.29px;font-size:11px;line-height:11px;letter-spacing:-0.05px">Vue Hexa 3</div>
<div class="t" style="left:328.3px;top:9.29px;font-size:11px;line-height:11px;letter-spacing:-0.05px">Vue Hexa 4</div>
<div class="t" style="left:427.3px;top:9.29px;font-size:11px;line-height:11px;letter-spacing:-0.05px">Vue Hexa 5</div>
</div>
<svg style="left:0;top:380px" width="459" height="25" viewBox="0 380 459 25"><defs><linearGradient id="cg" x1="0" y1="0" x2="1" y2="0"><stop offset="0" stop-color="#d6d6de"/><stop offset=".5" stop-color="#fafafa"/><stop offset="1" stop-color="#b4b8b4"/></linearGradient></defs>
<g transform="translate(12.8 386)"><rect x="5.200" y=".2" width="11" height="10" rx="1.200" fill="#c4c4c4" stroke="#a4a4a4" stroke-width=".5"/><rect x="5.800" y=".6" width="3.200" height="9.200" rx="1" fill="url(#cg)"/><rect x="9.200" y=".6" width="3.200" height="9.200" rx="1" fill="url(#cg)"/><rect x="12.600" y=".6" width="3.200" height="9.200" rx="1" fill="url(#cg)"/><path d="M.2 10.200V3q0-1 1-1H5.200V10.200z" fill="#f5b61e" stroke="#d09010" stroke-width=".5"/><rect x=".4" y="4" width="2.800" height="3.600" fill="#3f80cc"/><rect x="5.200" y="9.800" width="8" height=".9" fill="#6a6a6a"/><circle cx="3.200" cy="11.200" r="1.800" fill="#d8d8d8" stroke="#3a2020" stroke-width="1"/><circle cx="13.200" cy="11.200" r="1.800" fill="#d8d8d8" stroke="#3a2020" stroke-width="1"/></g>
<g transform="translate(111.8 386)"><rect x="5.200" y=".2" width="11" height="10" rx="1.200" fill="#c4c4c4" stroke="#a4a4a4" stroke-width=".5"/><rect x="5.800" y=".6" width="3.200" height="9.200" rx="1" fill="url(#cg)"/><rect x="9.200" y=".6" width="3.200" height="9.200" rx="1" fill="url(#cg)"/><rect x="12.600" y=".6" width="3.200" height="9.200" rx="1" fill="url(#cg)"/><path d="M.2 10.200V3q0-1 1-1H5.200V10.200z" fill="#f5b61e" stroke="#d09010" stroke-width=".5"/><rect x=".4" y="4" width="2.800" height="3.600" fill="#3f80cc"/><rect x="5.200" y="9.800" width="8" height=".9" fill="#6a6a6a"/><circle cx="3.200" cy="11.200" r="1.800" fill="#d8d8d8" stroke="#3a2020" stroke-width="1"/><circle cx="13.200" cy="11.200" r="1.800" fill="#d8d8d8" stroke="#3a2020" stroke-width="1"/></g>
<g transform="translate(210.8 386)"><rect x="5.200" y=".2" width="11" height="10" rx="1.200" fill="#c4c4c4" stroke="#a4a4a4" stroke-width=".5"/><rect x="5.800" y=".6" width="3.200" height="9.200" rx="1" fill="url(#cg)"/><rect x="9.200" y=".6" width="3.200" height="9.200" rx="1" fill="url(#cg)"/><rect x="12.600" y=".6" width="3.200" height="9.200" rx="1" fill="url(#cg)"/><path d="M.2 10.200V3q0-1 1-1H5.200V10.200z" fill="#f5b61e" stroke="#d09010" stroke-width=".5"/><rect x=".4" y="4" width="2.800" height="3.600" fill="#3f80cc"/><rect x="5.200" y="9.800" width="8" height=".9" fill="#6a6a6a"/><circle cx="3.200" cy="11.200" r="1.800" fill="#d8d8d8" stroke="#3a2020" stroke-width="1"/><circle cx="13.200" cy="11.200" r="1.800" fill="#d8d8d8" stroke="#3a2020" stroke-width="1"/></g>
<g transform="translate(309.8 386)"><rect x="5.200" y=".2" width="11" height="10" rx="1.200" fill="#c4c4c4" stroke="#a4a4a4" stroke-width=".5"/><rect x="5.800" y=".6" width="3.200" height="9.200" rx="1" fill="url(#cg)"/><rect x="9.200" y=".6" width="3.200" height="9.200" rx="1" fill="url(#cg)"/><rect x="12.600" y=".6" width="3.200" height="9.200" rx="1" fill="url(#cg)"/><path d="M.2 10.200V3q0-1 1-1H5.200V10.200z" fill="#f5b61e" stroke="#d09010" stroke-width=".5"/><rect x=".4" y="4" width="2.800" height="3.600" fill="#3f80cc"/><rect x="5.200" y="9.800" width="8" height=".9" fill="#6a6a6a"/><circle cx="3.200" cy="11.200" r="1.800" fill="#d8d8d8" stroke="#3a2020" stroke-width="1"/><circle cx="13.200" cy="11.200" r="1.800" fill="#d8d8d8" stroke="#3a2020" stroke-width="1"/></g>
<g transform="translate(408.8 386)"><rect x="5.200" y=".2" width="11" height="10" rx="1.200" fill="#c4c4c4" stroke="#a4a4a4" stroke-width=".5"/><rect x="5.800" y=".6" width="3.200" height="9.200" rx="1" fill="url(#cg)"/><rect x="9.200" y=".6" width="3.200" height="9.200" rx="1" fill="url(#cg)"/><rect x="12.600" y=".6" width="3.200" height="9.200" rx="1" fill="url(#cg)"/><path d="M.2 10.200V3q0-1 1-1H5.200V10.200z" fill="#f5b61e" stroke="#d09010" stroke-width=".5"/><rect x=".4" y="4" width="2.800" height="3.600" fill="#3f80cc"/><rect x="5.200" y="9.800" width="8" height=".9" fill="#6a6a6a"/><circle cx="3.200" cy="11.200" r="1.800" fill="#d8d8d8" stroke="#3a2020" stroke-width="1"/><circle cx="13.200" cy="11.200" r="1.800" fill="#d8d8d8" stroke="#3a2020" stroke-width="1"/></g>
</svg>
<div class="a" style="left:460px;top:383px;width:14.5px;height:19.5px;background:#f0f0f0;border:1px solid #929292;border-radius:2.5px;"></div>
<div class="a" style="left:475px;top:383px;width:14.5px;height:19.5px;background:#f0f0f0;border:1px solid #929292;border-radius:2.5px;"></div>
<svg style="left:460px;top:383px" width="30" height="19"><path d="M9 4.200v8.800l-5-4.400z" fill="#a0a0a0"/><path d="M19.300 4.200v8.800l5-4.400z" fill="#000"/></svg>
<div class="a" style="left:1px;top:405px;width:489px;height:120px;background:#fff8f0;border:1px solid #000;"></div>
<div class="a" style="left:2px;top:406px;width:487px;height:14px;background:#c0c0c0;border-bottom:1px solid #808080;"></div>
<div class="a" style="left:64px;top:407px;width:1px;height:13px;background:#808080;"></div>
<div class="a" style="left:65px;top:407px;width:1px;height:13px;background:#fff;"></div>
<div class="a" style="left:402px;top:407px;width:1px;height:13px;background:#808080;"></div>
<div class="a" style="left:403px;top:407px;width:1px;height:13px;background:#fff;"></div>
<div class="t m" style="left:6px;top:408px;">Addresse</div>
<div class="t m" style="left:70px;top:408px;">Hexa</div>
<div class="t m" style="left:408px;top:408px;">ASCII</div>
<div class="a" style="left:65px;top:421px;width:1px;height:87px;background:#c8c8c8;"></div>
<div class="a" style="left:403px;top:421px;width:1px;height:87px;background:#c8c8c8;"></div>
<div class="a" style="left:66px;top:421px;width:85px;height:11px;background:#c0c0c0;"></div>
<div class="a" style="left:407px;top:421px;width:28px;height:11px;background:#c0c0c0;"></div>
<div class="a" style="left:150px;top:421px;width:1px;height:11px;background:#808080;"></div>
<div class="a" style="left:234px;top:421px;width:1px;height:11px;background:#808080;"></div>
<div class="a" style="left:318px;top:421px;width:1px;height:11px;background:#808080;"></div>
<div class="a c" style="left:3px;top:421px;width:470px;height:87px">
<div class="t m" style="left:2px;top:0px;color:#f00">0505149F</div>
<div class="t m" style="left:66px;top:0px"><span class="pu">60</span> E8 <span class="g0">00</span> <span class="g0">00</span> <span class="g0">00</span> <span class="g0">00</span> <span class="pu">58</span> 05 <span class="pu">5A</span> 0B <span class="g0">00</span> <span class="g0">00</span> 8B <span class="pu">30</span> 03 F0</div>
<div class="t m" style="left:404px;top:0px"><span class="pu">`</span>è<span class="g0">.</span><span class="g0">.</span><span class="g0">.</span><span class="g0">.</span><span class="pu">X</span>.<span class="pu">Z</span>.<span class="g0">.</span><span class="g0">.</span>.<span class="pu">0</span>.ð</div>
<div class="t m" style="left:2px;top:11px;">050514AF</div>
<div class="t m" style="left:66px;top:11px"><span class="pu">2B</span> C0 8B FE <span class="pu">66</span> AD C1 E0 0C 8B C8 <span class="pu">50</span> AD <span class="pu">2B</span> C8 03</div>
<div class="t m" style="left:404px;top:11px"><span class="pu">+</span>À.þ<span class="pu">f</span>.Áà..È<span class="pu">P</span>.<span class="pu">+</span>È.</div>
<div class="t m" style="left:2px;top:22px;">050514BF</div>
<div class="t m" style="left:66px;top:22px">F1 8B C8 <span class="pu">57</span> <span class="pu">51</span> <span class="pu">49</span> 8A <span class="pu">44</span> <span class="pu">39</span> 06 88 04 <span class="pu">31</span> <span class="pu">75</span> F6 <span class="pu">2B</span></div>
<div class="t m" style="left:404px;top:22px">ñ.È<span class="pu">W</span><span class="pu">Q</span><span class="pu">I</span>.<span class="pu">D</span><span class="pu">9</span>...<span class="pu">1</span><span class="pu">u</span>ö<span class="pu">+</span></div>
<div class="t m" style="left:2px;top:33px;">050514CF</div>
<div class="t m" style="left:66px;top:33px">C0 AC 8B C8 80 E1 F0 <span class="pu">24</span> 0F C1 E0 0C 8A E8 AC 0B</div>
<div class="t m" style="left:404px;top:33px">À¬.È.áð<span class="pu">$</span>.Áà..è¬.</div>
<div class="t m" style="left:2px;top:44px;">050514DF</div>
<div class="t m" style="left:66px;top:44px">C8 <span class="pu">51</span> 02 CD BD <span class="g0">00</span> FD FF FF D3 E5 <span class="pu">59</span> <span class="pu">58</span> 8B DC 8D</div>
<div class="t m" style="left:404px;top:44px">È<span class="pu">Q</span>.Í½<span class="g0">.</span>ýÿÿÓå<span class="pu">Y</span><span class="pu">X</span>.Ü.</div>
<div class="t m" style="left:2px;top:55px;">050514EF</div>
<div class="t m" style="left:66px;top:55px">A4 <span class="pu">6C</span> 90 F1 FF FF <span class="pu">51</span> <span class="pu">2B</span> C9 <span class="pu">51</span> <span class="pu">51</span> <span class="pu">51</span> 8B CC <span class="pu">51</span> <span class="pu">66</span></div>
<div class="t m" style="left:404px;top:55px">¤<span class="pu">l</span>.ñÿÿ<span class="pu">Q</span><span class="pu">+</span>É<span class="pu">Q</span><span class="pu">Q</span><span class="pu">Q</span>.Ì<span class="pu">Q</span><span class="pu">f</span></div>
<div class="t m" style="left:2px;top:66px;">050514FF</div>
<div class="t m" style="left:66px;top:66px">17 C1 E2 0C <span class="pu">52</span> <span class="pu">57</span> 83 C1 04 <span class="pu">51</span> <span class="pu">50</span> 83 C1 04 <span class="pu">56</span> <span class="pu">51</span></div>
<div class="t m" style="left:404px;top:66px">.Áâ.<span class="pu">R</span><span class="pu">W</span>.Á.<span class="pu">Q</span><span class="pu">P</span>.Á.<span class="pu">V</span><span class="pu">Q</span></div>
<div class="t m" style="left:2px;top:77px;">0505150F</div>
<div class="t m" style="left:66px;top:77px">E8 <span class="pu">5E</span> <span class="g0">00</span> <span class="g0">00</span> <span class="g0">00</span> 8B E3 <span class="pu">5E</span> <span class="pu">5A</span> <span class="pu">2B</span> C0 89 04 <span class="pu">32</span> B4 10</div>
<div class="t m" style="left:404px;top:77px">è<span class="pu">^</span><span class="g0">.</span><span class="g0">.</span><span class="g0">.</span>.ã<span class="pu">^</span><span class="pu">Z</span><span class="pu">+</span>À..<span class="pu">2</span>´.</div>
</div>
<div class="a" style="left:472.5px;top:406px;width:16.5px;height:102px;background:#f0f0f0;"></div>
<div class="a" style="left:472.5px;top:430px;width:16.5px;height:17px;background:#cdcdcd;"></div>
<svg style="left:480.75px;top:415.2px" width="1" height="1"><path d="M-3.3 1.7L0 -1.7L3.3 1.7" fill="none" stroke="#505050" stroke-width="2"/></svg>
<svg style="left:480.75px;top:499.5px" width="1" height="1"><path d="M-3.3 -1.7L0 1.7L3.3 -1.7" fill="none" stroke="#505050" stroke-width="2"/></svg>
<div class="a" style="left:2px;top:508px;width:471px;height:16px;background:#f0f0f0;"></div>
<div class="a" style="left:20px;top:508px;width:380px;height:16px;background:#cdcdcd;"></div>
<svg style="left:10.5px;top:516.0px" width="1" height="1"><path d="M1.7 -3.3L-1.7 0L1.700 3.300" fill="none" stroke="#505050" stroke-width="2"/></svg>
<svg style="left:464.5px;top:516.0px" width="1" height="1"><path d="M-1.7 -3.3L1.7 0L-1.700 3.300" fill="none" stroke="#505050" stroke-width="2"/></svg>
<div class="a" style="left:473px;top:508px;width:16px;height:16px;background:#f0f0f0;"></div>
<div class="a" style="left:491px;top:381px;width:319px;height:144px;background:#fff8f0;border:1px solid #828790;"></div>
<div class="a" style="left:555px;top:382px;width:1px;height:125px;background:#c8c8c8;"></div>
<div class="a" style="left:621px;top:382px;width:1px;height:125px;background:#c8c8c8;"></div>
<div class="a" style="left:492px;top:382px;width:300.5px;height:11px;background:#c0c0c0;"></div>
<div class="a" style="left:492px;top:382px;width:63px;height:11px;background:#000;"></div>
<div class="a c" style="left:492px;top:382px;width:301px;height:125px">
<div class="t m" style="left:3.5px;top:0px;color:#fff">0019FF54</div>
<div class="t m" style="left:68px;top:0px">0505149F</div>
<div class="t m" style="left:134px;top:0px;">wso.EntryPoint</div>
<div class="t m" style="left:3.5px;top:11px;color:#f00">0019FF58</div>
<div class="t m" style="left:68px;top:11px">0505149F</div>
<div class="t m" style="left:134px;top:11px;">wso.EntryPoint</div>
<div class="t m" style="left:3.5px;top:22px;color:#808080">0019FF5C</div>
<div class="t m" style="left:68px;top:22px">0019FF80</div>
<div class="t m" style="left:3.5px;top:33px;color:#808080">0019FF60</div>
<div class="t m" style="left:68px;top:33px">0019FF74</div>
<div class="t m" style="left:3.5px;top:44px;color:#808080">0019FF64</div>
<div class="t m" style="left:68px;top:44px">00228000</div>
<div class="t m" style="left:3.5px;top:55px;color:#f00">0019FF68</div>
<div class="t m" style="left:68px;top:55px">0505149F</div>
<div class="t m" style="left:134px;top:55px;">wso.EntryPoint</div>
<div class="t m" style="left:3.5px;top:66px;color:#f00">0019FF6C</div>
<div class="t m" style="left:68px;top:66px">0505149F</div>
<div class="t m" style="left:134px;top:66px;">wso.EntryPoint</div>
<div class="t m" style="left:3.5px;top:77px;color:#808080">0019FF70</div>
<div class="t m" style="left:68px;top:77px">0019FFCC</div>
<div class="t m" style="left:3.5px;top:88px;color:#808080">0019FF74</div>
<div class="t m" style="left:68px;top:88px">770CFCC9</div>
<div class="t m" style="left:134px;top:88px;color:#f00">return to kernel32.770CFCC9 from ???</div>
<div class="t m" style="left:3.5px;top:99px;color:#808080">0019FF78</div>
<div class="t m" style="left:68px;top:99px">00228000</div>
<div class="t m" style="left:3.5px;top:110px;color:#f00">0019FF7C</div>
<div class="t m" style="left:68px;top:110px">770CFCB0</div>
<div class="t m" style="left:134px;top:110px;">kernel32.770CFCB0</div>
<div class="t m" style="left:3.5px;top:121px;color:#808080">0019FF80</div>
<div class="t m" style="left:68px;top:121px">0019FFDC</div>
</div>
<div class="a" style="left:792.5px;top:382px;width:16.5px;height:125.5px;background:#f0f0f0;"></div>
<div class="a" style="left:792.5px;top:472px;width:16.5px;height:17.5px;background:#cdcdcd;"></div>
<svg style="left:800.75px;top:391.2px" width="1" height="1"><path d="M-3.3 1.7L0 -1.7L3.3 1.7" fill="none" stroke="#505050" stroke-width="2"/></svg>
<svg style="left:800.75px;top:499.0px" width="1" height="1"><path d="M-3.3 -1.7L0 1.7L3.3 -1.7" fill="none" stroke="#505050" stroke-width="2"/></svg>
<div class="a" style="left:492px;top:507.5px;width:300.5px;height:16.5px;background:#f0f0f0;"></div>
<div class="a" style="left:509px;top:507.5px;width:69px;height:16.5px;background:#cdcdcd;"></div>
<svg style="left:500.5px;top:515.75px" width="1" height="1"><path d="M1.7 -3.3L-1.7 0L1.700 3.300" fill="none" stroke="#505050" stroke-width="2"/></svg>
<svg style="left:784.0px;top:515.75px" width="1" height="1"><path d="M-1.7 -3.3L1.7 0L-1.700 3.300" fill="none" stroke="#505050" stroke-width="2"/></svg>
<div class="a" style="left:792.5px;top:507.5px;width:16.5px;height:16.5px;background:#f0f0f0;"></div>
<div class="t " style="left:3.3px;top:533.29px;font-size:11px;line-height:11px;letter-spacing:-0.491px;">Commande:</div>
<div class="a" style="left:63px;top:527px;width:672px;height:20px;background:#fff;border:1px solid #7a7a7a;"></div>
<div class="a" style="left:734px;top:527px;width:75px;height:20px;background:#e1e1e1;border:1px solid #adadad;"></div>
<div class="t " style="left:738px;top:532.79px;font-size:11px;line-height:11px;letter-spacing:0.020px;">Default</div>
<svg style="left:795px;top:535px" width="9" height="5"><path d="M0 0h8l-4 4.5z" fill="#000"/></svg>
<div class="a" style="left:1px;top:549px;width:809px;height:23px;background:#c6c6c6;"></div>
<div class="a" style="left:3px;top:552px;width:64px;height:18px;background:#ff0;border:1px solid #909090;border-right-color:#f4f4f4;border-bottom-color:#f4f4f4;"></div>
<div class="t " style="left:16.4px;top:556.19px;font-size:11px;line-height:11px;color:#f00;letter-spacing:-0.385px;">Paused</div>
<div class="a" style="left:73px;top:552px;width:546px;height:18px;background:#c6c6c6;border:1px solid #808080;border-right-color:#f4f4f4;border-bottom-color:#f4f4f4;"></div>
<div class="t " style="left:76.5px;top:556.39px;font-size:11px;line-height:11px;letter-spacing:0.05px;">wso.exe: 050514A0 --&gt; 050514A0 (0x00000001 bytes)</div>
<div class="a" style="left:621px;top:552px;width:188px;height:18px;background:#c6c6c6;border:1px solid #808080;border-right-color:#f4f4f4;border-bottom-color:#f4f4f4;"></div>
<div class="t " style="left:624.7px;top:556.69px;font-size:11px;line-height:11px;letter-spacing:0.041px;">Temps perdu à déboguer: 2:11:26:19</div>
<div class="a" style="left:493px;top:187px;width:134px;height:16px;background:#f3d968;mix-blend-mode:multiply;"></div>
<div class="a" style="left:149px;top:431px;width:278.5px;height:430.3px;background:#f0f0f0;border:1px solid #f6f6f6;box-shadow:2px 2px 1px rgba(0,0,0,0.33), 3px 3px 2px rgba(0,0,0,0.16);"></div>
<svg style="left:154px;top:436px" width="16" height="16" viewBox="0 0 16 16"><path d="M2.400 .5H10L13.600 4V15.200H2.400z" fill="#cfe2f6" stroke="#7ea4cc" stroke-width=".8"/><path d="M10 .5V4H13.600z" fill="#f4f9ff" stroke="#7ea4cc" stroke-width=".6"/><text x="4.200" y="8.600" font-family="Liberation Serif,serif" font-size="5.600" font-weight="bold" fill="#2a3a4a">01</text><text x="4.200" y="13.600" font-family="Liberation Serif,serif" font-size="5.600" font-weight="bold" fill="#2a3a4a">10</text></svg>
<div class="t " style="left:182.4px;top:439.99px;font-size:11px;line-height:11px;letter-spacing:-0.350px;">Binaire</div>
<svg style="left:409px;top:440.5px" width="4" height="7"><path d="M0 0L4 3.5L0 7z" fill="#000"/></svg>
<svg style="left:154px;top:458px" width="16" height="16" viewBox="0 0 16 16"><path d="M1.200 .6H7L9.600 3.200V12.400H1.200z" fill="url(#pg)" stroke="#98a8a8" stroke-width=".8"/><path d="M6 3.200H12L14.800 6V15.200H6z" fill="url(#pg)" stroke="#98a8a8" stroke-width=".8"/><path d="M12 3.200V6H14.800" fill="#fff" stroke="#98a8a8" stroke-width=".6"/></svg>
<div class="t " style="left:182.4px;top:461.99px;font-size:11px;line-height:11px;letter-spacing:-0.234px;">Copier</div>
<svg style="left:409px;top:462.5px" width="4" height="7"><path d="M0 0L4 3.5L0 7z" fill="#000"/></svg>
<svg style="left:154px;top:480px" width="16" height="16" viewBox="0 0 16 16"><rect x=".5" y=".5" width="14.600" height="14.600" rx="1" fill="#3f9a3f" stroke="#2a6e2a" stroke-width=".8"/><rect x="2.400" y="2.400" width="10.800" height="10.800" fill="none" stroke="#e8d060" stroke-width="1.400" stroke-dasharray=".9 .9"/><rect x="3.200" y="3.600" width="9.200" height="8.400" fill="#2c2c2c"/><text x="3.700" y="10.600" font-family="Liberation Sans,sans-serif" font-weight="bold" font-size="7.200" fill="#fff" textLength="8.200" lengthAdjust="spacingAndGlyphs">32</text></svg>
<div class="t " style="left:182.4px;top:483.99px;font-size:11px;line-height:11px;letter-spacing:-0.267px;">Suivre dans le Désassembleur</div>
<svg style="left:154px;top:502px" width="16" height="16" viewBox="0 0 16 16"><rect x=".3" y=".4" width="14.800" height="6.600" fill="#3f9a3f" stroke="#2a6e2a" stroke-width=".6"/><rect x="2" y="1.800" width="2.800" height="3" fill="#1e3a1e"/><rect x="6.200" y="1.800" width="2.800" height="3" fill="#1e3a1e"/><rect x="10.400" y="1.800" width="2.800" height="3" fill="#1e3a1e"/><path d="M1 7.600h13.600" stroke="#c8b040" stroke-width="1.200" stroke-dasharray="1 .9"/><circle cx="3.600" cy="11.600" r="2.300" fill="#d8ecfa" stroke="#8aa0b4" stroke-width=".9"/><path d="M2 13.400L.4 15.400" stroke="#8a8a8a" stroke-width="1.300" stroke-linecap="round"/><text x="8.200" y="15.200" font-family="Liberation Sans,sans-serif" font-size="8.600" fill="#111" textLength="7.400" lengthAdjust="spacingAndGlyphs">@</text></svg>
<div class="t " style="left:182.4px;top:505.99px;font-size:11px;line-height:11px;letter-spacing:-0.159px;">Suivre dans la cartographie mémoire</div>
<svg style="left:154px;top:524px" width="16" height="16" viewBox="0 0 16 16"><g transform="rotate(-42 8 8.500)"><path d="M-1 5.300H12.400L16 8.500L12.400 11.700H-1z" fill="#3a98ea" stroke="#f4f8fc" stroke-width="1.500"/><path d="M-1 5.300H12.400L16 8.500L12.400 11.700H-1z" fill="none" stroke="#9ab0c4" stroke-width=".3"/><rect x=".5" y="7" width="10" height="2.600" fill="#8accf8"/><circle cx="13" cy="8.500" r="1" fill="#fff" stroke="#8aa0b4" stroke-width=".3"/></g><path d="M11.300 10h2v1.900h1.900v2h-1.900v1.900h-2v-1.900h-1.900v-2h1.900z" fill="#2cc03c" stroke="#158a24" stroke-width=".5"/></svg>
<div class="t " style="left:182.4px;top:527.99px;font-size:11px;line-height:11px;letter-spacing:-0.082px;">Étiqueter l&#x27;Adresse Courante</div>
<div class="t " style="left:376.8px;top:527.99px;font-size:11px;line-height:11px;">:</div>
<svg style="left:154px;top:546px" width="16" height="16" viewBox="0 0 16 16"><path d="M1.400 5.600Q.6 1 3.600 1.400Q5 1.600 5.400 3M14 5.600Q14.800 1 11.800 1.400Q10.400 1.600 10 3" fill="#b87838" stroke="#8a5420" stroke-width=".6"/><ellipse cx="7.700" cy="8.400" rx="7.200" ry="6" fill="#cf9450"/><ellipse cx="7.700" cy="11" rx="4" ry="3.200" fill="#f2dcb8"/><ellipse cx="4.800" cy="7.800" rx="1" ry="1.300" fill="#2a1a0a"/><ellipse cx="10.600" cy="7.800" rx="1" ry="1.300" fill="#2a1a0a"/><ellipse cx="7.700" cy="10.400" rx="1.400" ry="1" fill="#2a1a0a"/><path d="M7.700 11.400v1.400" stroke="#2a1a0a" stroke-width=".6"/></svg>
<div class="t " style="left:182.4px;top:549.99px;font-size:11px;line-height:11px;letter-spacing:-0.336px;">Watch DWORD</div>
<svg style="left:154px;top:568px" width="16" height="16" viewBox="0 0 16 16"><path d="M.4 15.600L1.600 11.800L12.400 1L15.200 3.800L4.400 14.600z" fill="#f4d050" stroke="#b08a20" stroke-width=".6"/><path d="M11 2.400L13.800 5.200L15.400 3.600Q15.800 3.200 15.400 2.800L13.400.8Q13 .4 12.600.8z" fill="#ee6070"/><path d="M10.400 3L13.200 5.800" stroke="#c8c8c8" stroke-width="1"/><path d="M.4 15.600L1.600 11.800L4.400 14.600z" fill="#f0dcb8"/><path d="M.4 15.600l.5-1.600l1.100 1.100z" fill="#222"/><path d="M3 13.200L12.600 3.600" stroke="#e0b030" stroke-width=".8"/></svg>
<div class="t " style="left:182.4px;top:571.99px;font-size:11px;line-height:11px;letter-spacing:-0.096px;">Modifier valeur</div>
<div class="t " style="left:376.8px;top:571.99px;font-size:11px;line-height:11px;letter-spacing:-0.541px;">Space</div>
<div class="a" style="left:151px;top:587px;width:272px;height:22px;background:#91c9f7;"></div>
<svg style="left:154px;top:590px" width="16" height="16" viewBox="0 0 16 16"><circle cx="7.5" cy="7.6" r="3.550" fill="url(#rb)"/></svg>
<div class="t " style="left:182.4px;top:593.99px;font-size:11px;line-height:11px;letter-spacing:0.049px;">Point d&#x27;arrêt</div>
<svg style="left:409px;top:594.5px" width="4" height="7"><path d="M0 0L4 3.5L0 7z" fill="#000"/></svg>
<svg style="left:154px;top:612px" width="16" height="16" viewBox="0 0 16 16"><path d="M5 .6H11.400L14.200 3.400V13.400H5z" fill="#e4ecec" stroke="#a8b8b8" stroke-width=".8"/><path d="M11.400 .6V3.400H14.200" fill="#f8ffff" stroke="#a8b8b8" stroke-width=".6"/><circle cx="7.600" cy="9" r="3" fill="#d8ecfa" fill-opacity=".9" stroke="#8a9cac" stroke-width="1"/><path d="M5.400 11.200L1.600 15" stroke="#9aa4a8" stroke-width="1.600" stroke-linecap="round"/></svg>
<div class="t " style="left:182.4px;top:615.99px;font-size:11px;line-height:11px;letter-spacing:0.026px;">Rechercher un Motif...</div>
<div class="t " style="left:376.8px;top:615.99px;font-size:11px;line-height:11px;letter-spacing:-0.096px;">Ctrl+B</div>
<svg style="left:154px;top:634px" width="16" height="16" viewBox="0 0 16 16"><path d="M1 15V8.400L2.600 3.600V1.600Q2.600 1 3.200 1H5.200Q5.800 1 5.800 1.600V3.600L6.800 6V15zM14.800 15V8.400L13.200 3.600V1.600Q13.200 1 12.600 1H10.600Q10 1 10 1.600V3.600L9 6V15z" fill="#3a3a3a" stroke="#1e1e1e" stroke-width=".5"/><rect x="6.600" y="5" width="2.600" height="4.400" fill="#4a4a4a"/><path d="M1.200 13.400h5.400M9.200 13.400h5.400" stroke="#7a7a7a" stroke-width=".8"/><path d="M2.600 9v3.600M12 9v3.600" stroke="#6a6a6a" stroke-width=".8"/></svg>
<div class="t " style="left:182.4px;top:637.99px;font-size:11px;line-height:11px;letter-spacing:-0.130px;">Chercher Références</div>
<div class="t " style="left:376.8px;top:637.99px;font-size:11px;line-height:11px;letter-spacing:-0.081px;">Ctrl+R</div>
<svg style="left:154px;top:656px" width="16" height="16" viewBox="0 0 16 16"><path d="M2.400 8.200A5.600 5.600 0 0 1 11.600 4" fill="none" stroke="#56aef2" stroke-width="2.400"/><path d="M9.200 5.800L14.600 1L14.800 7.400z" fill="#3a96ea"/><path d="M13.400 7.800A5.600 5.600 0 0 1 4.200 12" fill="none" stroke="#56aef2" stroke-width="2.400"/><path d="M6.600 10.200L1.200 15L1 8.600z" fill="#3a96ea"/></svg>
<div class="t " style="left:182.4px;top:659.99px;font-size:11px;line-height:11px;letter-spacing:-0.133px;">Synchroniser avec une expression</div>
<svg style="left:154px;top:678px" width="16" height="16" viewBox="0 0 16 16"><rect x=".3" y=".4" width="14.800" height="6.600" fill="#3f9a3f" stroke="#2a6e2a" stroke-width=".6"/><rect x="2" y="1.800" width="2.800" height="3" fill="#1e3a1e"/><rect x="6.200" y="1.800" width="2.800" height="3" fill="#1e3a1e"/><rect x="10.400" y="1.800" width="2.800" height="3" fill="#1e3a1e"/><path d="M1 7.600h13.600" stroke="#c8b040" stroke-width="1.200" stroke-dasharray="1 .9"/><path d="M10.4 8.6h2.400v2.300h2.300v2.400h-2.300v2.300h-2.400v-2.300h-2.300v-2.400h2.300z" fill="#2cc03c" stroke="#158a24" stroke-width=".5"/></svg>
<div class="t " style="left:182.4px;top:681.99px;font-size:11px;line-height:11px;letter-spacing:-0.233px;">Allouer de la mémoire</div>
<svg style="left:154px;top:700px" width="16" height="16" viewBox="0 0 16 16"><path d="M1 12.400V9.400Q1 8.400 2 8.200L3.400 5Q3.800 4.200 4.800 4.200H11Q12 4.200 12.400 5L13.800 8.200Q14.800 8.400 14.800 9.400V12.400z" fill="#5a9ae0" stroke="#2a5ea8" stroke-width=".6"/><path d="M3.600 8L4.600 5.400H11.200L12.200 8z" fill="#d0e4f8" stroke="#2a5ea8" stroke-width=".4"/><rect x="1.600" y="9.600" width="2.600" height="1.400" rx=".5" fill="#ffb040"/><rect x="11.600" y="9.600" width="2.600" height="1.400" rx=".5" fill="#ffb040"/><rect x="1.600" y="12.400" width="2.600" height="1.800" fill="#222"/><rect x="11.600" y="12.400" width="2.600" height="1.800" fill="#222"/><rect x="5.400" y="10" width="5" height="1.200" fill="#2a5ea8"/><path d="M7.600 2H11.600V.2L15.600 3.200L11.600 6.200V4.400H7.600z" fill="#3a94e8" stroke="#e8f2fc" stroke-width=".5"/></svg>
<div class="t " style="left:182.4px;top:703.99px;font-size:11px;line-height:11px;letter-spacing:-0.127px;">Aller à</div>
<svg style="left:409px;top:704.5px" width="4" height="7"><path d="M0 0L4 3.5L0 7z" fill="#000"/></svg>
<div class="a" style="left:179px;top:723px;width:244px;height:1px;background:#d7d7d7;"></div>
<svg style="left:154px;top:731px" width="16" height="16" viewBox="0 0 16 16"><circle cx="7.800" cy="7.600" r="7.200" fill="#fbd448" stroke="#d8a420" stroke-width=".6"/><ellipse cx="7.800" cy="5" rx="5" ry="2.600" fill="#fde488" fill-opacity=".7"/><path d="M1.400 5.600H14.200V6.400Q14 8.400 11.600 8.400T8.800 6.600H6.800Q6.400 8.400 4 8.400T1.400 6.400z" fill="#2a2a2a"/><path d="M5.400 11.400Q8.200 12.800 10.800 10.800" fill="none" stroke="#8a5a10" stroke-width=".8" stroke-linecap="round"/></svg>
<div class="t " style="left:182.4px;top:734.99px;font-size:11px;line-height:11px;letter-spacing:-0.122px;">Hexa</div>
<svg style="left:409px;top:735.5px" width="4" height="7"><path d="M0 0L4 3.5L0 7z" fill="#000"/></svg>
<svg style="left:154px;top:753px" width="16" height="16" viewBox="0 0 16 16"><text x="1.600" y="12.200" font-family="Liberation Serif,serif" font-weight="bold" font-size="11.500" fill="#222">A</text><text x="10.300" y="12.200" font-family="Liberation Serif,serif" font-weight="bold" font-size="8" fill="#222">z</text></svg>
<div class="t " style="left:182.4px;top:756.99px;font-size:11px;line-height:11px;letter-spacing:0.361px;">Texte</div>
<svg style="left:409px;top:757.5px" width="4" height="7"><path d="M0 0L4 3.5L0 7z" fill="#000"/></svg>
<svg style="left:154px;top:775px" width="16" height="16" viewBox="0 0 16 16"><rect x="1.800" y="3.700" width="11.200" height="8.600" rx="1.600" fill="#e83840" stroke="#f49098" stroke-width=".6"/><text x="3" y="10.800" font-family="Liberation Sans,sans-serif" font-weight="bold" font-size="7.200" fill="#fff" textLength="8.800" lengthAdjust="spacingAndGlyphs">42</text></svg>
<div class="t " style="left:182.4px;top:778.99px;font-size:11px;line-height:11px;letter-spacing:-0.225px;">Entier</div>
<svg style="left:409px;top:779.5px" width="4" height="7"><path d="M0 0L4 3.5L0 7z" fill="#000"/></svg>
<svg style="left:154px;top:797px" width="16" height="16" viewBox="0 0 16 16"><path d="M7.600 .6Q12 8 12 11Q12 15.400 7.600 15.400T3.200 11Q3.200 8 7.600 .6z" fill="#a8d4f8" stroke="#6aa8e4" stroke-width=".8"/><path d="M5 11.400Q5 13.400 7 13.800" fill="none" stroke="#fff" stroke-width="1" stroke-linecap="round"/></svg>
<div class="t " style="left:182.4px;top:800.99px;font-size:11px;line-height:11px;letter-spacing:-0.014px;">Float</div>
<svg style="left:409px;top:801.5px" width="4" height="7"><path d="M0 0L4 3.5L0 7z" fill="#000"/></svg>
<svg style="left:154px;top:819px" width="16" height="16" viewBox="0 0 16 16"><rect x="1" y=".8" width="12" height="14.400" rx="1" fill="#3a7ed0" stroke="#1e4e98" stroke-width=".8"/><rect x="1" y=".8" width="2" height="14.400" fill="#1e4e98"/><path d="M13.400 3h1.400v2.400h-1.400zM13.400 6.800h1.400v2.400h-1.400zM13.400 10.600h1.400v2.400h-1.400z" fill="#d8d8d8" stroke="#909090" stroke-width=".3"/><text x="4" y="11" font-family="Liberation Sans,sans-serif" font-size="8.500" fill="#fff">@</text></svg>
<div class="t " style="left:182.4px;top:822.99px;font-size:11px;line-height:11px;letter-spacing:-0.166px;">Adresse</div>
<svg style="left:154px;top:841px" width="16" height="16" viewBox="0 0 16 16"><rect x=".4" y=".4" width="14.800" height="14.800" rx="1" fill="#3f9a3f" stroke="#2a6e2a" stroke-width=".8"/><rect x="2.600" y="2.600" width="10.400" height="10.400" fill="none" stroke="#e8d060" stroke-width="1.400" stroke-dasharray=".9 .9"/><rect x="3.600" y="3.600" width="8.400" height="8.400" fill="#2c2c2c"/><rect x="4.800" y="4.800" width="6" height="6" fill="#444"/></svg>
<div class="t " style="left:182.4px;top:844.99px;font-size:11px;line-height:11px;letter-spacing:-0.338px;">Vue Désassembleur</div>
<div class="a" style="left:422px;top:588px;width:179px;height:167px;background:#f0f0f0;border:1px solid #f6f6f6;box-shadow:2px 2px 1px rgba(0,0,0,0.33), 3px 3px 2px rgba(0,0,0,0.16);"></div>
<div class="a" style="left:424px;top:590px;width:174px;height:22px;background:#91c9f7;"></div>
<svg style="left:428px;top:593px" width="16" height="16" viewBox="0 0 16 16"><circle cx="6.7" cy="7.7" r="3.550" fill="url(#rb)"/><path d="M8.600 12L10.400 14L14.600 9.200" fill="none" stroke="#2cae3c" stroke-width="2" stroke-linecap="round" stroke-linejoin="round"/></svg>
<div class="t " style="left:455px;top:596.99px;font-size:11px;line-height:11px;letter-spacing:-0.060px;">Matériel, Accès</div>
<svg style="left:582px;top:597.5px" width="4" height="7"><path d="M0 0L4 3.5L0 7z" fill="#000"/></svg>
<svg style="left:428px;top:615px" width="16" height="16" viewBox="0 0 16 16"><circle cx="6.7" cy="7.7" r="3.550" fill="url(#rb)"/><path d="M6 15.200L6.600 12.800L13 6.400L14.800 8.200L8.400 14.600z" fill="#f2c840" stroke="#8a6818" stroke-width=".4"/><path d="M12.200 7.200L14 9L14.800 8.200L13 6.400z" fill="#e85858"/><path d="M6 15.200L6.600 12.800L8.400 14.600z" fill="#f0dcb8"/><path d="M6 15.200l.3-1l.7.700z" fill="#222"/></svg>
<div class="t " style="left:455px;top:618.99px;font-size:11px;line-height:11px;letter-spacing:-0.030px;">Matériel, Écriture</div>
<svg style="left:582px;top:619.5px" width="4" height="7"><path d="M0 0L4 3.5L0 7z" fill="#000"/></svg>
<svg style="left:428px;top:637px" width="16" height="16" viewBox="0 0 16 16"><circle cx="6.7" cy="7.7" r="3.550" fill="url(#rb)"/><path d="M8.600 11.200H11.600V9.400L15.200 12.400L11.600 15.400V13.600H8.600z" fill="#3a94e8" stroke="#1a64c0" stroke-width=".5"/></svg>
<div class="t " style="left:455px;top:640.99px;font-size:11px;line-height:11px;letter-spacing:-0.055px;">Matériel, Exécution</div>
<div class="a" style="left:452px;top:660px;width:146px;height:1px;background:#d7d7d7;"></div>
<svg style="left:428px;top:668px" width="16" height="16" viewBox="0 0 16 16"><rect x="-0.800" y=".4" width="10" height="3.600" fill="#3f9a3f" stroke="#2a6e2a" stroke-width=".4"/><rect x="0" y="1" width="2" height="1.800" fill="#1e3a1e"/><rect x="3" y="1" width="2" height="1.800" fill="#1e3a1e"/><rect x="6" y="1" width="2" height="1.800" fill="#1e3a1e"/><path d="M-0.400 4.400h9" stroke="#c8b040" stroke-width=".8" stroke-dasharray=".8 .7"/><circle cx="6.7" cy="8" r="3.550" fill="url(#rb)"/><path d="M8.600 12L10.400 14L14.600 9.200" fill="none" stroke="#2cae3c" stroke-width="2" stroke-linecap="round" stroke-linejoin="round"/></svg>
<div class="t " style="left:455px;top:671.99px;font-size:11px;line-height:11px;letter-spacing:-0.218px;">Mémoire, Accès</div>
<svg style="left:582px;top:672.5px" width="4" height="7"><path d="M0 0L4 3.5L0 7z" fill="#000"/></svg>
<svg style="left:428px;top:690px" width="16" height="16" viewBox="0 0 16 16"><rect x="-0.800" y=".4" width="10" height="3.600" fill="#3f9a3f" stroke="#2a6e2a" stroke-width=".4"/><rect x="0" y="1" width="2" height="1.800" fill="#1e3a1e"/><rect x="3" y="1" width="2" height="1.800" fill="#1e3a1e"/><rect x="6" y="1" width="2" height="1.800" fill="#1e3a1e"/><path d="M-0.400 4.400h9" stroke="#c8b040" stroke-width=".8" stroke-dasharray=".8 .7"/><circle cx="6.7" cy="8" r="3.550" fill="url(#rb)"/><path d="M9 6.400H13.400L15.200 8.200V13H9z" fill="#f0f4f4" stroke="#a0a8a8" stroke-width=".5"/><circle cx="11.400" cy="10.600" r="1.700" fill="#d8ecfa" stroke="#7a8a9a" stroke-width=".7"/><path d="M10.200 12L7.600 15" stroke="#8a7a4a" stroke-width="1.200" stroke-linecap="round"/></svg>
<div class="t " style="left:455px;top:693.99px;font-size:11px;line-height:11px;letter-spacing:-0.125px;">Mémoire, Lecture</div>
<svg style="left:582px;top:694.5px" width="4" height="7"><path d="M0 0L4 3.5L0 7z" fill="#000"/></svg>
<svg style="left:428px;top:712px" width="16" height="16" viewBox="0 0 16 16"><rect x="-0.800" y=".4" width="10" height="3.600" fill="#3f9a3f" stroke="#2a6e2a" stroke-width=".4"/><rect x="0" y="1" width="2" height="1.800" fill="#1e3a1e"/><rect x="3" y="1" width="2" height="1.800" fill="#1e3a1e"/><rect x="6" y="1" width="2" height="1.800" fill="#1e3a1e"/><path d="M-0.400 4.400h9" stroke="#c8b040" stroke-width=".8" stroke-dasharray=".8 .7"/><circle cx="6.7" cy="8" r="3.550" fill="url(#rb)"/><path d="M6 15.200L6.600 12.800L13 6.400L14.800 8.200L8.400 14.600z" fill="#f2c840" stroke="#8a6818" stroke-width=".4"/><path d="M12.200 7.200L14 9L14.800 8.200L13 6.400z" fill="#e85858"/><path d="M6 15.200L6.600 12.800L8.400 14.600z" fill="#f0dcb8"/><path d="M6 15.200l.3-1l.7.700z" fill="#222"/></svg>
<div class="t " style="left:455px;top:715.99px;font-size:11px;line-height:11px;letter-spacing:-0.129px;">Mémoire, Écriture</div>
<svg style="left:582px;top:716.5px" width="4" height="7"><path d="M0 0L4 3.5L0 7z" fill="#000"/></svg>
<svg style="left:428px;top:734px" width="16" height="16" viewBox="0 0 16 16"><rect x="-0.800" y=".4" width="10" height="3.600" fill="#3f9a3f" stroke="#2a6e2a" stroke-width=".4"/><rect x="0" y="1" width="2" height="1.800" fill="#1e3a1e"/><rect x="3" y="1" width="2" height="1.800" fill="#1e3a1e"/><rect x="6" y="1" width="2" height="1.800" fill="#1e3a1e"/><path d="M-0.400 4.400h9" stroke="#c8b040" stroke-width=".8" stroke-dasharray=".8 .7"/><circle cx="6.7" cy="8" r="3.550" fill="url(#rb)"/><path d="M8.600 11.200H11.600V9.400L15.200 12.400L11.600 15.400V13.600H8.600z" fill="#3a94e8" stroke="#1a64c0" stroke-width=".5"/></svg>
<div class="t " style="left:455px;top:737.99px;font-size:11px;line-height:11px;letter-spacing:-0.151px;">Mémoire, Exécution</div>
<svg style="left:582px;top:738.5px" width="4" height="7"><path d="M0 0L4 3.5L0 7z" fill="#000"/></svg>
<div class="a" style="left:595px;top:590px;width:104px;height:71px;background:#f0f0f0;border:1px solid #f6f6f6;box-shadow:2px 2px 1px rgba(0,0,0,0.33), 3px 3px 2px rgba(0,0,0,0.16);"></div>
<svg style="left:601px;top:596px" width="16" height="16" viewBox="0 0 16 16"><circle cx="6.4" cy="7.5" r="3.550" fill="url(#rb)"/><text x="10.800" y="15.400" font-family="Liberation Sans,sans-serif" font-weight="bold" font-size="7" fill="#000">B</text></svg>
<div class="t " style="left:628.4px;top:600.29px;font-size:11px;line-height:11px;letter-spacing:0.201px;">Octet</div>
<svg style="left:601px;top:618px" width="16" height="16" viewBox="0 0 16 16"><circle cx="6.4" cy="7.5" r="3.550" fill="url(#rb)"/><text x="9.200" y="15.400" font-family="Liberation Sans,sans-serif" font-weight="bold" font-size="7" fill="#000">W</text></svg>
<div class="t " style="left:628.4px;top:622.29px;font-size:11px;line-height:11px;letter-spacing:-0.123px;">Word</div>
<div class="a" style="left:597px;top:637px;width:98px;height:22px;background:#91c9f7;"></div>
<svg style="left:601px;top:640px" width="16" height="16" viewBox="0 0 16 16"><circle cx="6.4" cy="7.5" r="3.550" fill="url(#rb)"/><text x="10.800" y="15.400" font-family="Liberation Sans,sans-serif" font-weight="bold" font-size="7" fill="#000">D</text></svg>
<div class="t " style="left:628.4px;top:644.29px;font-size:11px;line-height:11px;letter-spacing:-0.319px;">Dword</div>
<svg style="left:677px;top:650px" width="13" height="20" viewBox="0 0 13 20"><path d="M0.5 0.7V17.2L4.3 13.5L6.9 19.3L9.3 18.2L6.8 12.6H11.9Z" fill="#fff" stroke="#000" stroke-width="1"/></svg>
</body></html>
